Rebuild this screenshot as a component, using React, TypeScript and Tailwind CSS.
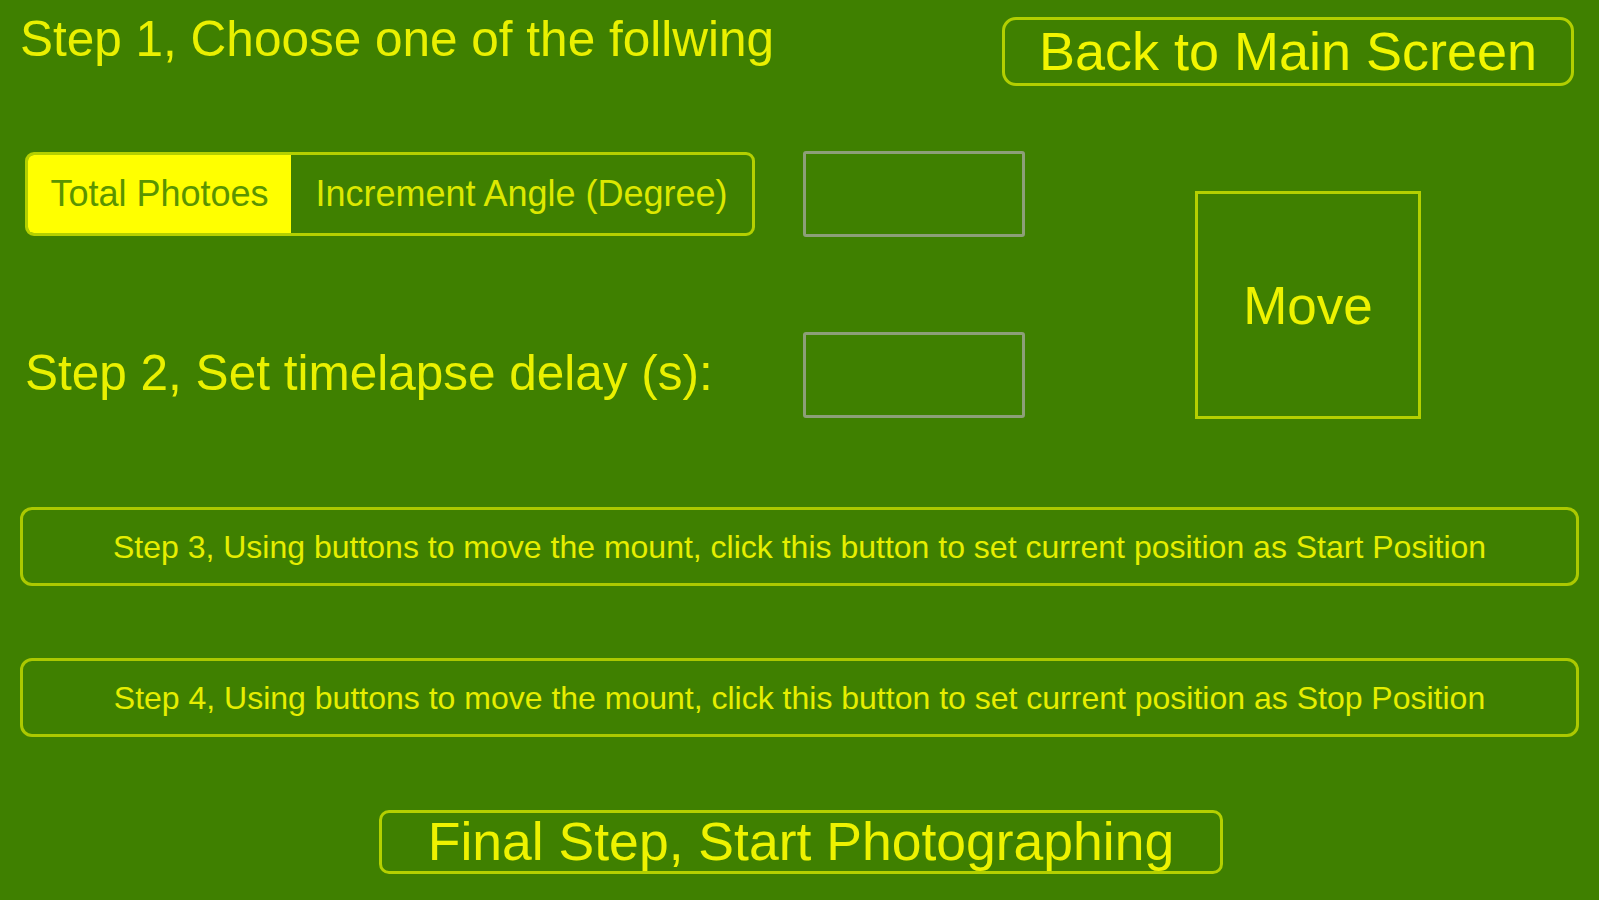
const font = { fontFamily: '"Liberation Sans", Arial, sans-serif' };

const WideButton = ({ text }: { text: string }) => {
  return (
    <button
      className="flex h-[79px] w-[1559px] items-center justify-center rounded-[12px] border-[3px] border-[#abc900] text-[32px] leading-none text-[#e6ee00]"
    >
      {text}
    </button>
  );
};

export default function App() {
  return (
    <div
      className="flex h-[900px] w-[1599px] flex-col overflow-hidden bg-[#3f8000] text-[#eef200]"
      style={font}
    >
      {/* header */}
      <div className="flex items-start justify-between pl-[20px] pr-[25px] pt-[17px]">
        <h1 className="mt-[-3px] text-[49.5px] leading-none text-[#eaf000]">
          Step 1, Choose one of the follwing
        </h1>
        <button className="flex h-[69px] w-[572px] items-center justify-center rounded-[14px] border-[3px] border-[#b2cf00] pb-[2px] text-[54px] leading-none text-[#f2f500]">
          Back to Main Screen
        </button>
      </div>

      {/* step 1 / step 2 controls */}
      <div className="ml-[25px] mt-[65px] flex items-start">
        <div className="flex flex-col gap-[95px]">
          <div className="flex h-[86px] items-center">
            <div className="flex h-[84px] w-[730px] overflow-hidden rounded-[9px] border-[3px] border-[#b4d000] text-[36px] leading-none">
              <div className="flex w-[263px] items-center justify-center bg-[#ffff00] text-[#5a9400]">
                Total Photoes
              </div>
              <div className="flex flex-1 items-center justify-center text-[#dde800]">
                Increment Angle (Degree)
              </div>
            </div>
            <div className="ml-[48px] h-[86px] w-[222px] rounded-[3px] border-[3px] border-[#8d9f78]" />
          </div>
          <div className="flex h-[86px] items-center">
            <div className="mt-[-4px] w-[778px] text-[49.5px] leading-none text-[#eaf000]">
              Step 2, Set timelapse delay (s):
            </div>
            <div className="h-[86px] w-[222px] rounded-[3px] border-[3px] border-[#8d9f78]" />
          </div>
        </div>
        <button className="ml-[170px] mt-[40px] flex h-[228px] w-[226px] items-center justify-center border-[3px] border-[#b4d000] text-[53px] leading-none text-[#eef200]">
          Move
        </button>
      </div>

      {/* step 3 / step 4 */}
      <div className="ml-[20px] mt-[88px] flex flex-col gap-[72px]">
        <WideButton text="Step 3, Using buttons to move the mount, click this button to set current position as Start Position" />
        <WideButton text="Step 4, Using buttons to move the mount, click this button to set current position as Stop Position" />
      </div>

      <div className="ml-[379px] mt-[73px] flex">
        <button className="flex h-[64px] w-[844px] items-center justify-center rounded-[10px] border-[3px] border-[#b4d000] text-[53.5px] leading-none text-[#eef200]">
          Final Step, Start Photographing
        </button>
      </div>
    </div>
  );
}
